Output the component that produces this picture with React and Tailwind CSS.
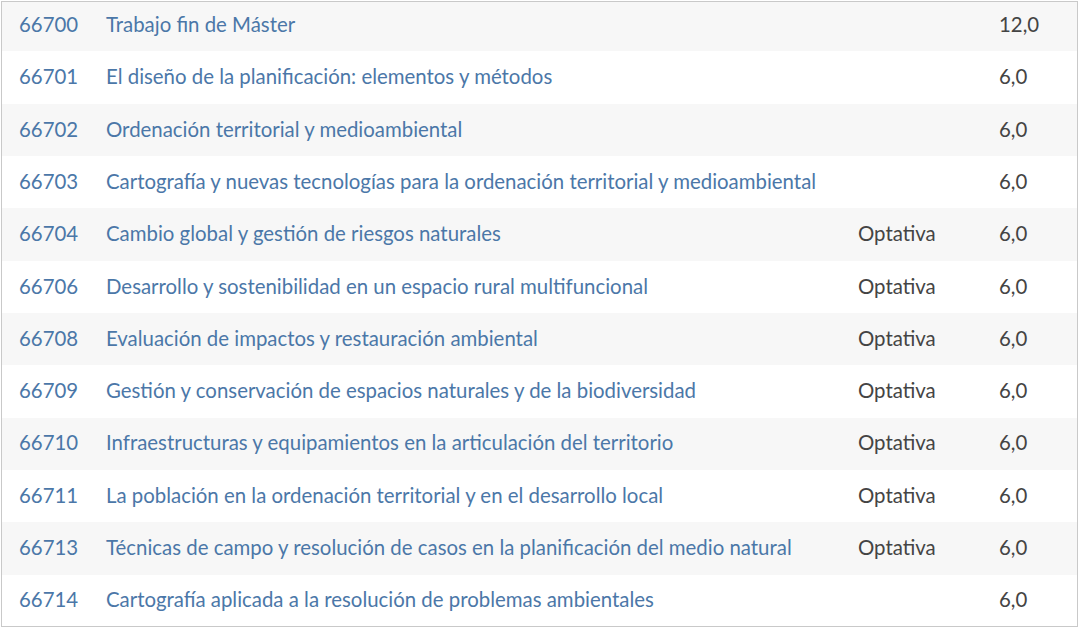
import React from 'react';

const rows = [
  { code: '66700', name: 'Trabajo fin de Máster', type: '', credits: '12,0' },
  { code: '66701', name: 'El diseño de la planificación: elementos y métodos', type: '', credits: '6,0' },
  { code: '66702', name: 'Ordenación territorial y medioambiental', type: '', credits: '6,0' },
  { code: '66703', name: 'Cartografía y nuevas tecnologías para la ordenación territorial y medioambiental', type: '', credits: '6,0' },
  { code: '66704', name: 'Cambio global y gestión de riesgos naturales', type: 'Optativa', credits: '6,0' },
  { code: '66706', name: 'Desarrollo y sostenibilidad en un espacio rural multifuncional', type: 'Optativa', credits: '6,0' },
  { code: '66708', name: 'Evaluación de impactos y restauración ambiental', type: 'Optativa', credits: '6,0' },
  { code: '66709', name: 'Gestión y conservación de espacios naturales y de la biodiversidad', type: 'Optativa', credits: '6,0' },
  { code: '66710', name: 'Infraestructuras y equipamientos en la articulación del territorio', type: 'Optativa', credits: '6,0' },
  { code: '66711', name: 'La población en la ordenación territorial y en el desarrollo local', type: 'Optativa', credits: '6,0' },
  { code: '66713', name: 'Técnicas de campo y resolución de casos en la planificación del medio natural', type: 'Optativa', credits: '6,0' },
  { code: '66714', name: 'Cartografía aplicada a la resolución de problemas ambientales', type: '', credits: '6,0' },
];

export default function App() {
  return (
    <div className="w-[1080px] h-[629px] bg-white pt-px pl-px" style={{ fontFamily: 'Lato, "Open Sans", sans-serif' }}>
      <div className="w-[1077px] h-[626px] border border-[#c9c9c9] overflow-hidden">
        <div className="-mt-[3px]">
          {rows.map((r, i) => (
            <div
              key={r.code}
              className={`flex items-center h-[52.33px] pb-[2px] text-[20.4px] whitespace-nowrap ${i % 2 === 0 ? 'bg-[#f7f7f7]' : 'bg-white'}`}
            >
              <span className="w-[104px] shrink-0 pl-[17px] text-[#4b77a8]">{r.code}</span>
              <span className="w-[752px] shrink-0 text-[#4b77a8]">{r.name}</span>
              <span className="w-[141px] shrink-0 text-[#444]">{r.type}</span>
              <span className="text-[#444]">{r.credits}</span>
            </div>
          ))}
        </div>
      </div>
    </div>
  );
}
